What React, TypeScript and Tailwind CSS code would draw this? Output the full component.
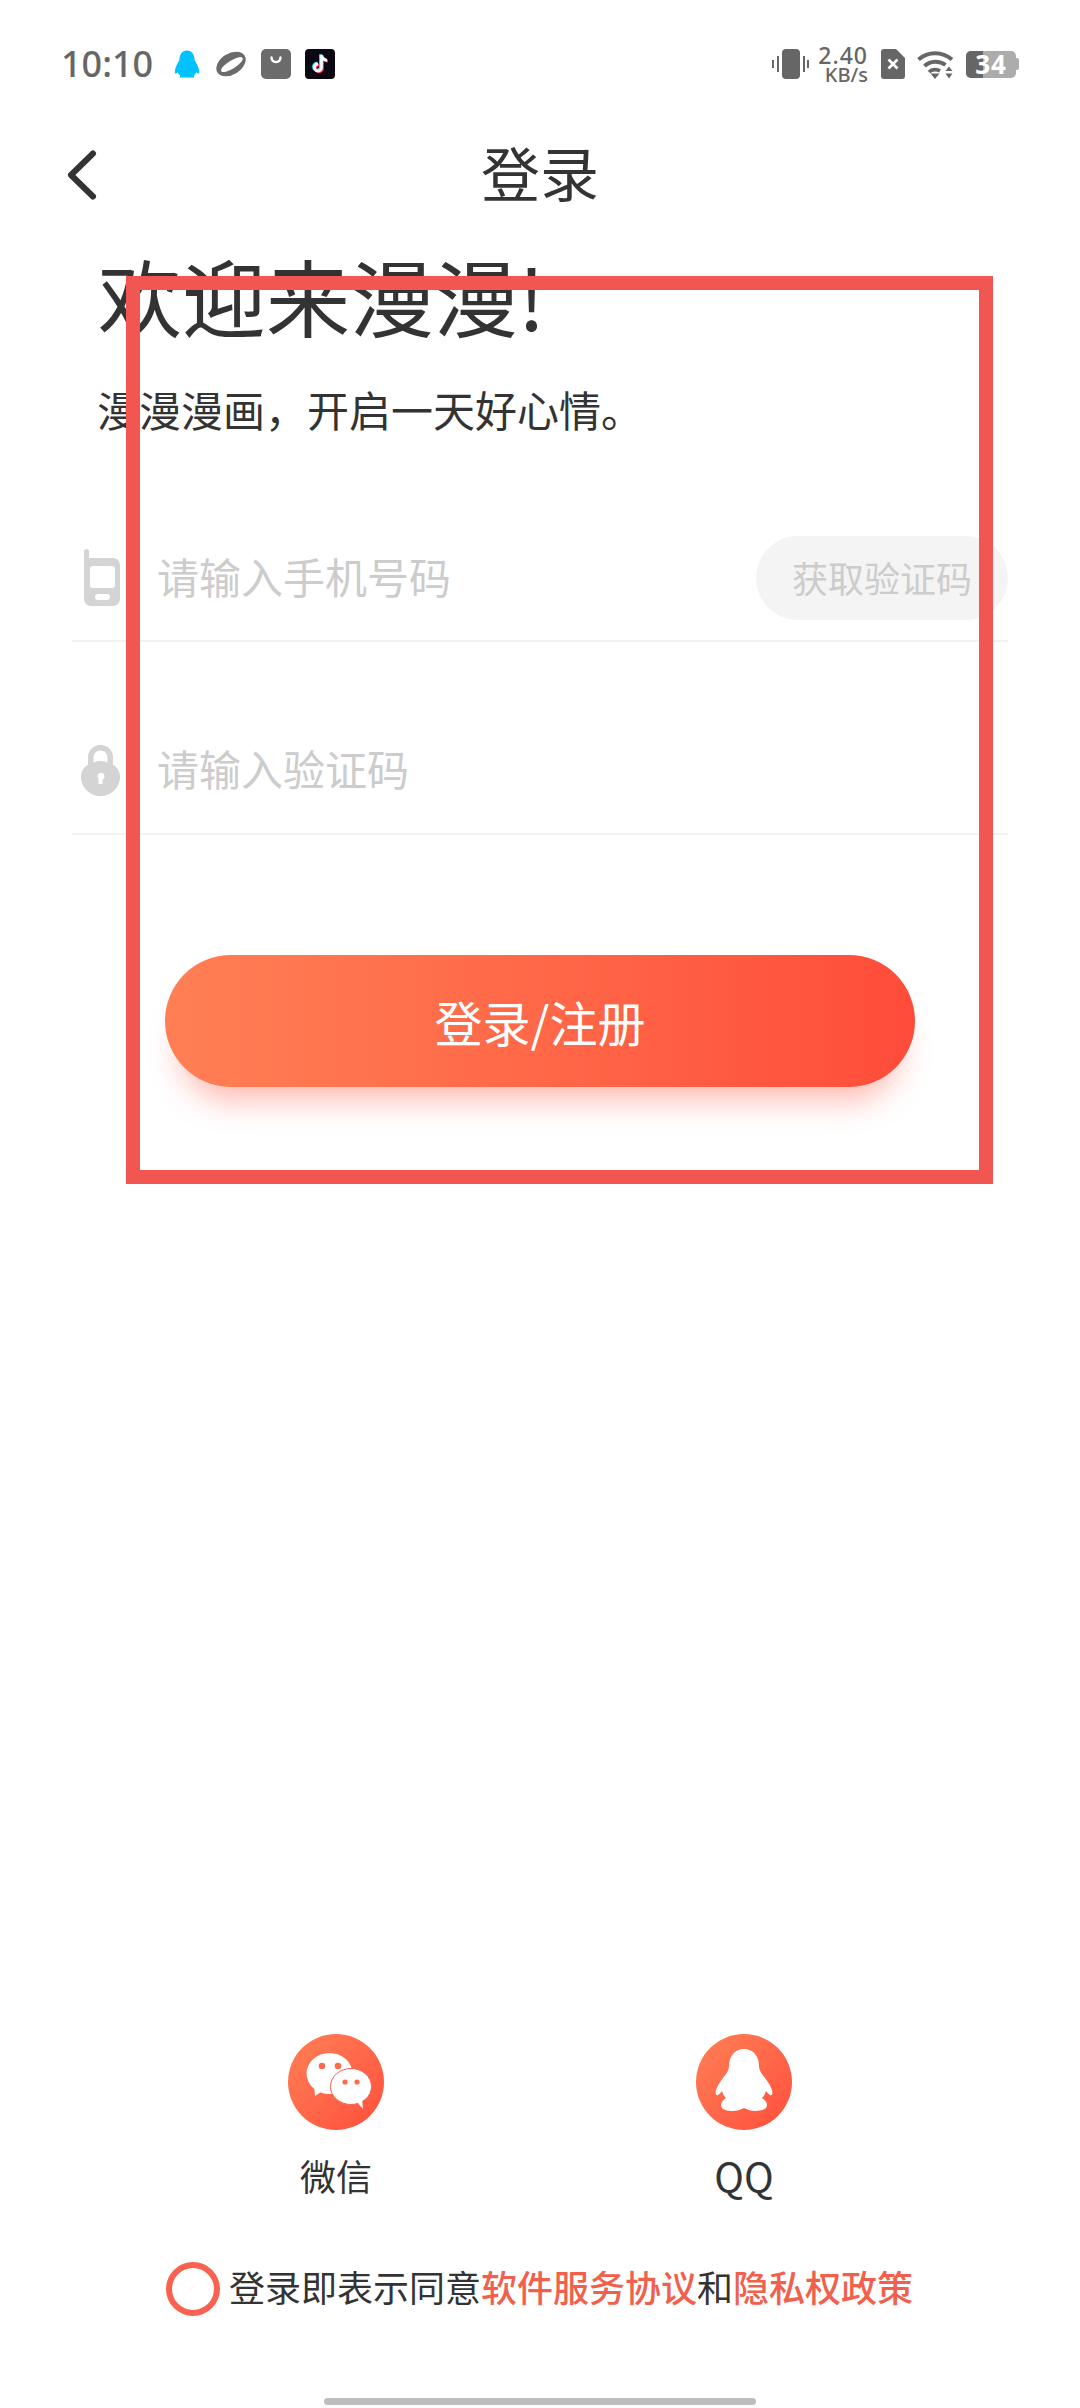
import React from 'react';

const FONT = "font-['Noto_Sans_CJK_SC','Noto_Sans',sans-serif]";

function QQStatusIcon() {
  return (
    <svg width="28" height="30" viewBox="0 0 96 96" className="text-[#00c2ff]">
      <path fill="currentColor" d="M48 2C30 2 22 18 22 34c-8 14-16 28-16 42 0 6 5 6 10 0 2 4 4 8 8 10v8h48v-8c4-2 6-6 8-10 5 6 10 6 10 0 0-14-8-28-16-42C74 18 66 2 48 2Z" />
    </svg>
  );
}

function PlanetIcon() {
  return (
    <svg width="32" height="30" viewBox="0 0 32 30">
      <g transform="rotate(-32 16 15)">
        <ellipse cx="16" cy="15" rx="16" ry="10.500" fill="#6b6b6b" />
        <ellipse cx="16.500" cy="16" rx="12.500" ry="4" fill="#fff" />
      </g>
    </svg>
  );
}

function BagIcon() {
  return (
    <svg width="30" height="30" viewBox="0 0 30 30">
      <path d="M5 0h20a5 5 0 0 1 5 5v20a5 5 0 0 1-5 5H5a5 5 0 0 1-5-5V5a5 5 0 0 1 5-5Z" fill="#6b6b6b" />
      <path d="M10.500 8.500c.5 6 8.500 6 9 0" fill="none" stroke="#fff" strokeWidth="2.400" strokeLinecap="round" />
    </svg>
  );
}

function TiktokIcon() {
  return (
    <svg width="30" height="30" viewBox="0 0 30 30">
      <rect width="30" height="30" rx="4" fill="#0b0713" />
      <path d="M16.500 6v12.500a3.500 3.500 0 1 1-3.500-3.500M16.500 6c.4 3 2.500 5 5.500 5.300" fill="none" stroke="#27f4ee" strokeWidth="2.800" transform="translate(-1 -.8)" />
      <path d="M16.500 6v12.500a3.500 3.500 0 1 1-3.500-3.500M16.500 6c.4 3 2.500 5 5.500 5.300" fill="none" stroke="#fe2c55" strokeWidth="2.800" transform="translate(1 .8)" />
      <path d="M16.500 6v12.500a3.500 3.500 0 1 1-3.500-3.500M16.500 6c.4 3 2.500 5 5.500 5.300" fill="none" stroke="#fff" strokeWidth="2.800" />
    </svg>
  );
}

function VibrateIcon() {
  return (
    <svg width="37" height="30" viewBox="0 0 37 30">
      <rect x="10" width="18" height="30" rx="4" fill="#666" />
      <path d="M6 7v16M1 11v8M32 7v16M36 11v8" stroke="#666" strokeWidth="2" fill="none" />
    </svg>
  );
}

function SimIcon() {
  return (
    <svg width="24" height="30" viewBox="0 0 24 30">
      <path d="M3 0h12l9 9v18a3 3 0 0 1-3 3H3a3 3 0 0 1-3-3V3a3 3 0 0 1 3-3Z" fill="#666" />
      <path d="M7.500 10.500l9 9m0-9l-9 9" stroke="#fff" strokeWidth="2.600" />
    </svg>
  );
}

function WifiIcon() {
  return (
    <svg width="37" height="29" viewBox="0 0 37 29">
      <path d="M1.500 9.500C11 1 25 1 35 9.500" fill="none" stroke="#666" strokeWidth="4" />
      <path d="M7.500 16C13.500 10.500 22.500 10.500 28.500 15" fill="none" stroke="#666" strokeWidth="4" />
      <path d="M12 22C15 19 20 19 23 21" fill="none" stroke="#666" strokeWidth="3.600" />
      <path d="M13.500 23.500h9L18 29ZM28.500 21l3.500-4.500 3.500 4.500ZM28.500 23.500h7L32 28.500Z" fill="#666" />
    </svg>
  );
}

function BatteryIcon() {
  return (
    <div className="relative flex h-[27px] w-[54px] items-center">
      <div className="relative h-[27px] w-[50px] overflow-hidden rounded-[5px] bg-[#acacac]">
        <div className="h-full w-[17px] bg-[#666]" />
      </div>
      <div className="h-[12px] w-[3px] rounded-r-[2px] bg-[#acacac]" />
      <span className="absolute left-[9px] top-0 w-[32px] text-center text-[26px] font-bold leading-[27px] tracking-[1px] text-white font-['Noto_Sans',sans-serif]">34</span>
    </div>
  );
}

function PhoneIcon() {
  return (
    <svg width="36" height="57" viewBox="0 0 36 57">
      <path fillRule="evenodd" fill="#d4d4d4" d="M0 2.500a2.500 2.500 0 0 1 5 0V9h24a7 7 0 0 1 7 7v34a7 7 0 0 1-7 7H7a7 7 0 0 1-7-7ZM6 20v16a3 3 0 0 0 3 3h19a3 3 0 0 0 3-3V20a3 3 0 0 0-3-3H9a3 3 0 0 0-3 3ZM14 45a3 3 0 0 0 0 6h9a3 3 0 0 0 0-6Z" />
    </svg>
  );
}

function LockIcon() {
  return (
    <svg width="39" height="51" viewBox="0 0 39 51">
      <path fillRule="evenodd" fill="#d4d4d4" d="M7 20v-7.500C7 5 12.500 0 19.500 0S32 5 32 12.500V20c4.500 2 7 6.500 7 11.500C39 43 30 51 19.500 51S0 43 0 31.500C0 26.500 2.500 22 7 20ZM12.500 17.500a19 19 0 0 1 14 0v-5c0-4-3-7-7-7s-7 3-7 7ZM16.500 32a3.500 3.500 0 0 1 1 2.500V39h4v-4.500a3.500 3.500 0 1 0-5-2.500Z" />
    </svg>
  );
}

function WechatGlyph() {
  return (
    <svg width="96" height="96" viewBox="0 0 96 96">
      <ellipse cx="41.500" cy="39.500" rx="23" ry="20.500" fill="#fff" />
      <path d="M26 51l1 11 10-7Z" fill="#fff" />
      <circle cx="34" cy="32" r="3.300" fill="#ff6a4c" />
      <circle cx="50" cy="32" r="3.300" fill="#ff6a4c" />
      <ellipse cx="63" cy="52.500" rx="20.500" ry="18" fill="#fff" stroke="#f4624a" strokeWidth="1" />
      <path d="M69 68l6 7-1-10Z" fill="#fff" />
      <circle cx="57" cy="48" r="2.600" fill="#ff6a4c" />
      <circle cx="69" cy="48" r="2.600" fill="#ff6a4c" />
    </svg>
  );
}

function QQGlyph() {
  return (
    <svg width="96" height="96" viewBox="0 0 96 96">
      <path fill="#fff" d="M48 15C38 15 33 23 33 32C33 35 32 37 30 40C26 45 22 50 20 56C19 60 20 62 22 61C24 60 25 58 26 57C27 60 28 62 30 64C27 66 25 68 25 71C25 75 30 77 37 77C42 77 45 75 48 74C51 75 54 77 59 77C66 77 71 75 71 71C71 68 69 66 66 64C68 62 69 60 70 57C71 58 72 60 74 61C76 62 77 60 76 56C74 50 70 45 66 40C64 37 63 35 63 32C63 23 58 15 48 15Z" />
    </svg>
  );
}

function SocialItem({ label, labelClass, children }: { label: string; labelClass: string; children: React.ReactNode }) {
  return (
    <div className="flex w-[96px] flex-col items-center">
      <div className="h-[96px] w-[96px] rounded-full bg-linear-to-br from-[#ff7f56] to-[#ff4d3c]">{children}</div>
      <span className={`mt-[24px] whitespace-nowrap leading-[42px] text-[#333] ${labelClass}`}>{label}</span>
    </div>
  );
}

export default function App() {
  return (
    <div className={`relative flex h-[2408px] w-[1080px] flex-col overflow-hidden bg-white ${FONT}`}>
      {/* status bar */}
      <div className="mt-[32px] flex h-[64px] items-center justify-between pl-[61px] pr-[60px]">
        <div className="flex items-center">
          <span className="mr-[20px] text-[36px] font-medium leading-[64px] text-[#666] font-['Noto_Sans',sans-serif]">10:10</span>
          <div className="flex items-center gap-[14px]">
            <QQStatusIcon />
            <PlanetIcon />
            <BagIcon />
            <TiktokIcon />
          </div>
        </div>
        <div className="flex items-center">
          <VibrateIcon />
          <div className="ml-[12px] flex w-[47px] flex-col items-end text-[#666] font-['Noto_Sans',sans-serif]">
            <span className="text-[23px] font-medium leading-[22px] tracking-[1px]">2.40</span>
            <span className="text-[20px] font-medium leading-[18px]">KB/s</span>
          </div>
          <div className="ml-[13px] flex items-center gap-[12px]">
            <SimIcon />
            <WifiIcon />
            <BatteryIcon />
          </div>
        </div>
      </div>

      {/* nav */}
      <div className="relative mt-[36px] flex h-[80px] items-center justify-center">
        <svg width="30" height="50" viewBox="0 0 30 50" className="absolute left-[67px] top-[18px]">
          <path d="M26 3.500L4 25l22 21.500" fill="none" stroke="#333" strokeWidth="6" strokeLinecap="round" strokeLinejoin="round" />
        </svg>
        <span className="text-[59px] leading-[80px] text-[#333]">登录</span>
      </div>

      {/* welcome */}
      <h1 className="mt-[41px] pl-[98px] text-[84px] font-normal leading-[84px] text-[#333]">欢迎来漫漫!</h1>
      <p className="mt-[47px] pl-[97px] text-[42px] leading-[50px] text-[#333]">漫漫漫画，开启一天好心情。</p>

      {/* form */}
      <div className="mx-[72px] mt-[81px] flex h-[127px] items-center border-b-2 border-[#f2f2f2]">
        <div className="flex w-[85px] justify-start pl-[12px]">
          <PhoneIcon />
        </div>
        <span className="mb-[4px] flex-1 text-[42px] leading-[50px] text-[#cccccc]">请输入手机号码</span>
        <div className="flex h-[84px] w-[252px] items-center justify-center rounded-full bg-[#f4f4f4] pb-[2px] text-[36px] text-[#cccccc]">获取验证码</div>
      </div>
      <div className="mx-[72px] mt-[65px] flex h-[128px] items-center border-b-2 border-[#f2f2f2]">
        <div className="flex w-[85px] justify-start pl-[9px]">
          <LockIcon />
        </div>
        <span className="mb-[4px] flex-1 text-[42px] leading-[50px] text-[#cccccc]">请输入验证码</span>
      </div>

      <div className="mx-[165px] mt-[120px] flex h-[132px] items-center justify-center rounded-full bg-linear-to-r from-[#ff7f55] to-[#ff4c3a] text-[48px] text-white shadow-[0_28px_32px_-16px_rgba(255,90,70,0.45)]">
        登录/注册
      </div>

      {/* social login */}
      <div className="mt-auto flex justify-start gap-[312px] pl-[288px]">
        <SocialItem label="微信" labelClass="text-[36px]">
          <WechatGlyph />
        </SocialItem>
        <SocialItem label="QQ" labelClass="text-[40px]">
          <QQGlyph />
        </SocialItem>
      </div>

      {/* agreement */}
      <div className="mt-[66px] flex items-center pl-[166px]">
        <div className="h-[54px] w-[54px] rounded-full border-[6px] border-[#f9624f]" />
        <p className="mb-[6px] ml-[9px] whitespace-nowrap text-[36px] leading-[48px] text-[#333]">
          登录即表示同意<span className="font-medium text-[#f0604d]">软件服务协议</span>和<span className="font-medium text-[#f0604d]">隐私权政策</span>
        </p>
      </div>

      {/* home bar */}
      <div className="mx-auto mb-[3px] mt-[82px] h-[7px] w-[432px] rounded-full bg-[#bdbdbd]" />

      {/* red annotation box on top of the screenshot */}
      <div className="pointer-events-none absolute left-[126px] top-[276px] h-[908px] w-[867px] border-[14px] border-[#f25650]" />
    </div>
  );
}
